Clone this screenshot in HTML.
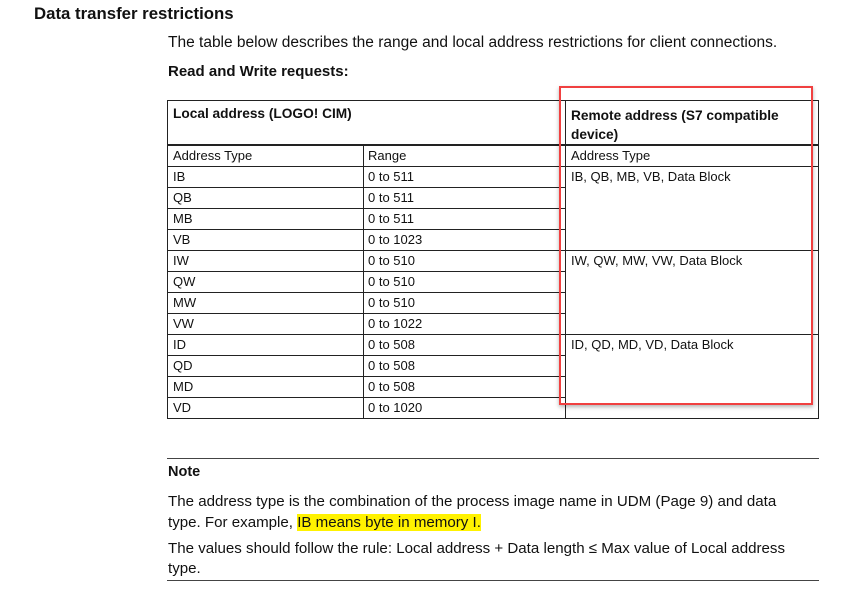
<!DOCTYPE html>
<html><head><style>
body{margin:0;width:864px;height:603px;background:#fff;font-family:"Liberation Sans",sans-serif;color:#111;position:relative;overflow:hidden}
.a{position:absolute;white-space:nowrap}
.hl{position:absolute;height:1px;background:#222}
.vl{position:absolute;width:1px;background:#222}
.t{position:absolute;font-size:13px;white-space:nowrap}
</style></head><body>
<div class="a" style="left:34px;top:4px;font-size:16.8px;font-weight:bold">Data transfer restrictions</div>
<div class="a" style="left:168px;top:34px;font-size:15.5px">The table below describes the range and local address restrictions for client connections.</div>
<div class="a" style="left:168px;top:63px;font-size:15px;font-weight:bold">Read and Write requests:</div>

<div class="hl" style="left:167px;top:100px;width:652px"></div>
<div class="hl" style="left:167px;top:144px;width:652px;height:2px"></div>
<div class="hl" style="left:167px;top:166px;width:652px"></div>
<div class="hl" style="left:167px;top:187px;width:398px"></div>
<div class="hl" style="left:167px;top:208px;width:398px"></div>
<div class="hl" style="left:167px;top:229px;width:398px"></div>
<div class="hl" style="left:167px;top:250px;width:652px"></div>
<div class="hl" style="left:167px;top:271px;width:398px"></div>
<div class="hl" style="left:167px;top:292px;width:398px"></div>
<div class="hl" style="left:167px;top:313px;width:398px"></div>
<div class="hl" style="left:167px;top:334px;width:652px"></div>
<div class="hl" style="left:167px;top:355px;width:398px"></div>
<div class="hl" style="left:167px;top:376px;width:398px"></div>
<div class="hl" style="left:167px;top:397px;width:398px"></div>
<div class="hl" style="left:167px;top:418px;width:652px"></div>
<div class="vl" style="left:167px;top:100px;height:319px"></div>
<div class="vl" style="left:363px;top:145px;height:274px"></div>
<div class="vl" style="left:565px;top:100px;height:319px"></div>
<div class="vl" style="left:818px;top:100px;height:319px"></div>

<div class="t" style="left:173px;top:106px;font-weight:bold;font-size:13.7px">Local address (LOGO! CIM)</div>
<div class="t" style="left:571px;top:106px;font-weight:bold;font-size:13.7px;line-height:19px">Remote address (S7 compatible<br>device)</div>
<div class="t" style="left:173px;top:148px">Address Type</div>
<div class="t" style="left:368px;top:148px">Range</div>
<div class="t" style="left:571px;top:148px">Address Type</div>

<div class="t" style="left:173px;top:169px">IB</div><div class="t" style="left:368px;top:169px">0 to 511</div>
<div class="t" style="left:173px;top:190px">QB</div><div class="t" style="left:368px;top:190px">0 to 511</div>
<div class="t" style="left:173px;top:211px">MB</div><div class="t" style="left:368px;top:211px">0 to 511</div>
<div class="t" style="left:173px;top:232px">VB</div><div class="t" style="left:368px;top:232px">0 to 1023</div>
<div class="t" style="left:173px;top:253px">IW</div><div class="t" style="left:368px;top:253px">0 to 510</div>
<div class="t" style="left:173px;top:274px">QW</div><div class="t" style="left:368px;top:274px">0 to 510</div>
<div class="t" style="left:173px;top:295px">MW</div><div class="t" style="left:368px;top:295px">0 to 510</div>
<div class="t" style="left:173px;top:316px">VW</div><div class="t" style="left:368px;top:316px">0 to 1022</div>
<div class="t" style="left:173px;top:337px">ID</div><div class="t" style="left:368px;top:337px">0 to 508</div>
<div class="t" style="left:173px;top:358px">QD</div><div class="t" style="left:368px;top:358px">0 to 508</div>
<div class="t" style="left:173px;top:379px">MD</div><div class="t" style="left:368px;top:379px">0 to 508</div>
<div class="t" style="left:173px;top:400px">VD</div><div class="t" style="left:368px;top:400px">0 to 1020</div>
<div class="t" style="left:571px;top:169px">IB, QB, MB, VB, Data Block</div>
<div class="t" style="left:571px;top:253px">IW, QW, MW, VW, Data Block</div>
<div class="t" style="left:571px;top:337px">ID, QD, MD, VD, Data Block</div>

<div style="position:absolute;left:559px;top:86px;width:250px;height:315px;border:2px solid #f04040;box-shadow:0 2px 4px rgba(0,0,0,0.3)"></div>

<div class="hl" style="left:167px;top:458px;width:652px;background:#444"></div>
<div class="a" style="left:168px;top:464px;font-size:14.5px;font-weight:bold">Note</div>
<div class="a" style="left:168px;top:491px;font-size:15.1px;line-height:21px">The address type is the combination of the process image name in UDM (Page 9) and data<br>type. For example, <span style="background:#fff200">IB means byte in memory I.</span></div>
<div class="a" style="left:168px;top:539px;font-size:15.1px;line-height:20px">The values should follow the rule: Local address + Data length ≤ Max value of Local address<br>type.</div>
<div class="hl" style="left:167px;top:580px;width:652px;background:#444"></div>
</body></html>
